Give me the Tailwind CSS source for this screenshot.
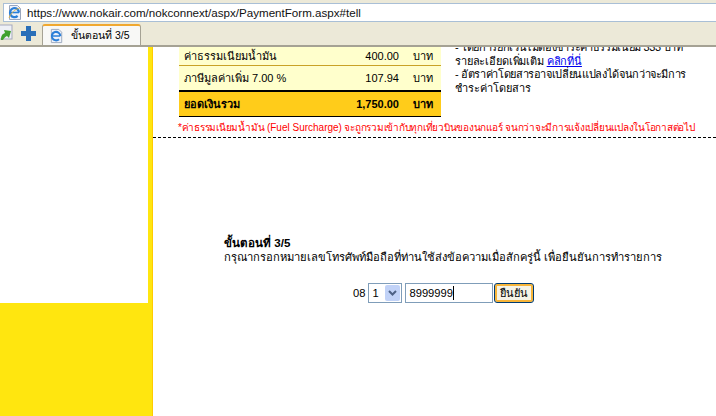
<!DOCTYPE html>
<html lang="th">
<head>
  <meta charset="UTF-8" />
  <title>ขั้นตอนที่ 3/5</title>
  <script src="https://cdn.jsdelivr.net/npm/@tailwindcss/browser@4"></script>
</head>
<body class="w-[716px] h-[416px] overflow-hidden bg-white flex flex-col font-['Liberation_Sans','Noto_Sans',sans-serif] text-[11.2px] text-black">

  <!-- browser chrome -->
  <div class="h-[47px] shrink-0 bg-[#ece9d8] border-b-2 border-[#a5a294] flex flex-col">
    <div class="h-[22px] pl-[3px] pt-[3px] shrink-0">
      <div class="h-[19px] bg-white border border-[#a9bfd6] border-r-0 flex items-center gap-[3px] pl-[3px]">
        <svg width="17" height="17" viewBox="0 0 17 17">
          <path d="M2.5 1.5h8l3 3v11h-11z" fill="#eef2fa" stroke="#9aa7bd"/>
          <path d="M12 8.5a4.5 4.5 0 1 0-1.4 3.4" fill="none" stroke="#2a7fd8" stroke-width="2.2"/>
          <path d="M4 8.5h8" stroke="#2a7fd8" stroke-width="1.6"/>
          <path d="M2 14c2-6 7-9 11-10" fill="none" stroke="#e3b23c" stroke-width="0.8"/>
        </svg>
        <span class="text-[11.6px] text-[#111] whitespace-nowrap">https://www.nokair.com/nokconnext/aspx/PaymentForm.aspx#tell</span>
      </div>
    </div>
    <div class="flex-1 flex items-end">
      <div class="w-[14px] h-[19px] overflow-hidden mb-[2px]">
        <svg width="14" height="17" viewBox="0 0 14 17">
          <rect x="-3" y="1" width="15" height="14" fill="#eef0f6" stroke="#a5a9bd"/>
          <path d="M1 16c0-4 1-6 4-7l-1-3 7 1-2 7-2-2c-2 1-3 2-4 4z" fill="#3fa02f"/>
        </svg>
      </div>
      <div class="w-[15px] h-[15px] ml-[7px] mb-[4px] shrink-0">
        <svg width="15" height="15" viewBox="0 0 15 15" class="block">
          <path d="M5 0h5v5h5v5h-5v5H5v-5H0V5h5z" fill="#2a6fb8"/>
        </svg>
      </div>
      <div class="w-[99px] h-[21px] ml-[6px] bg-[#f8f8f6] border border-[#a5a294] border-b-0 border-t-2 border-t-[#f0a830] rounded-t-[3px] flex items-center gap-[6px] pl-[6px]">
        <svg width="16" height="16" viewBox="0 0 17 17">
          <path d="M2.5 1.5h8l3 3v11h-11z" fill="#eef2fa" stroke="#9aa7bd"/>
          <path d="M12 8.5a4.5 4.5 0 1 0-1.4 3.4" fill="none" stroke="#2a7fd8" stroke-width="2.2"/>
          <path d="M4 8.5h8" stroke="#2a7fd8" stroke-width="1.6"/>
        </svg>
        <span class="text-[10.5px] whitespace-nowrap">ขั้นตอนที่ 3/5</span>
      </div>
    </div>
  </div>

  <div class="flex-1 flex min-h-0">
    <!-- left yellow sidebar -->
    <aside class="w-[153px] shrink-0 flex flex-col border-r-[1px] border-[#ffcc00] bg-[#ffe60f]">
      <div class="w-[148px] h-[256px] bg-white"></div>
    </aside>

    <main class="flex-1 min-w-0 overflow-hidden">
      <!-- fare summary -->
      <div class="h-[90px] flex pl-[26px] overflow-hidden text-[11px]">
        <div class="w-[262px] shrink-0">
          <div class="h-[19px] bg-[#ffffcc] border-b border-[#c9a227] flex items-center pl-[5px]">
            <span class="flex-1">ค่าธรรมเนียมน้ำมัน</span>
            <span class="w-[60px] text-right">400.00</span>
            <span class="w-[42px] pl-[14px]">บาท</span>
          </div>
          <div class="h-[25px] bg-[#ffffcc] border-b border-black flex items-center pl-[5px]">
            <span class="flex-1">ภาษีมูลค่าเพิ่ม 7.00 %</span>
            <span class="w-[60px] text-right">107.94</span>
            <span class="w-[42px] pl-[14px]">บาท</span>
          </div>
          <div class="h-[26px] bg-[#ffcc1a] border-y border-black flex items-center pl-[5px] font-bold">
            <span class="flex-1">ยอดเงินรวม</span>
            <span class="w-[80px] text-right">1,750.00</span>
            <span class="w-[42px] pl-[14px]">บาท</span>
          </div>
        </div>
        <div class="ml-[14px] w-[250px] leading-[13.5px] mt-[-6px]">
          <p class="whitespace-nowrap tracking-[-0.35px]">- โดยการยกเว้นไม่ต้องชำระค่าธรรมเนียม 333 บาท</p>
          <p class="tracking-[-0.15px]">รายละเอียดเพิ่มเติม <a class="text-[#0000ee] underline">คลิกที่นี่</a></p>
          <p class="whitespace-nowrap tracking-[-0.35px]">- อัตราค่าโดยสารอาจเปลี่ยนแปลงได้จนกว่าจะมีการ</p>
          <p>ชำระค่าโดยสาร</p>
        </div>
      </div>
      <p class="pl-[25px] mt-[-17px] h-[17px] text-[10px] leading-[15px] text-[#ff0000] whitespace-nowrap tracking-[-0.25px]">*ค่าธรรมเนียมน้ำมัน <span class="tracking-normal">(Fuel Surcharge)</span> จะถูกรวมเข้ากับทุกเที่ยวบินของนกแอร์ จนกว่าจะมีการแจ้งเปลี่ยนแปลงในโอกาสต่อไป</p>
      <div class="border-t border-dashed border-black"></div>

      <!-- step 3 -->
      <section class="pl-[71px] pt-[97px]">
        <p class="font-bold leading-[15px] text-[11.6px]">ขั้นตอนที่ 3/5</p>
        <p class="leading-[15px]">กรุณากรอกหมายเลขโทรศัพท์มือถือที่ท่านใช้ส่งข้อความเมื่อสักครู่นี้ เพื่อยืนยันการทำรายการ</p>
      </section>
      <div class="mt-[18px] pl-[200px] flex items-center h-[20px]">
        <span class="mr-[3px]">08</span>
        <div class="w-[34px] h-[20px] border border-[#7f9db9] flex items-center pl-[3px] mr-[3px] bg-white">
          <span class="flex-1">1</span>
          <span class="w-[15px] h-[16px] mr-[1px] bg-[#c1d2f7] rounded-[2px] flex items-center justify-center">
            <svg width="9" height="7" viewBox="0 0 9 7"><path d="M1 1l3.5 3.5L8 1" fill="none" stroke="#4d6185" stroke-width="2"/></svg>
          </span>
        </div>
        <div class="w-[88px] h-[20px] border border-[#7f9db9] flex items-center pl-[3px] mr-[1px]">
          <span>8999999</span><span class="w-px h-[14px] bg-black"></span>
        </div>
        <button class="w-[40px] h-[20px] bg-[#f5f3e6] border border-[#003c74] rounded-[3px] shadow-[inset_0_0_0_2px_#f7b53a] text-[11px]">ยืนยัน</button>
      </div>
    </main>
  </div>
</body>
</html>
